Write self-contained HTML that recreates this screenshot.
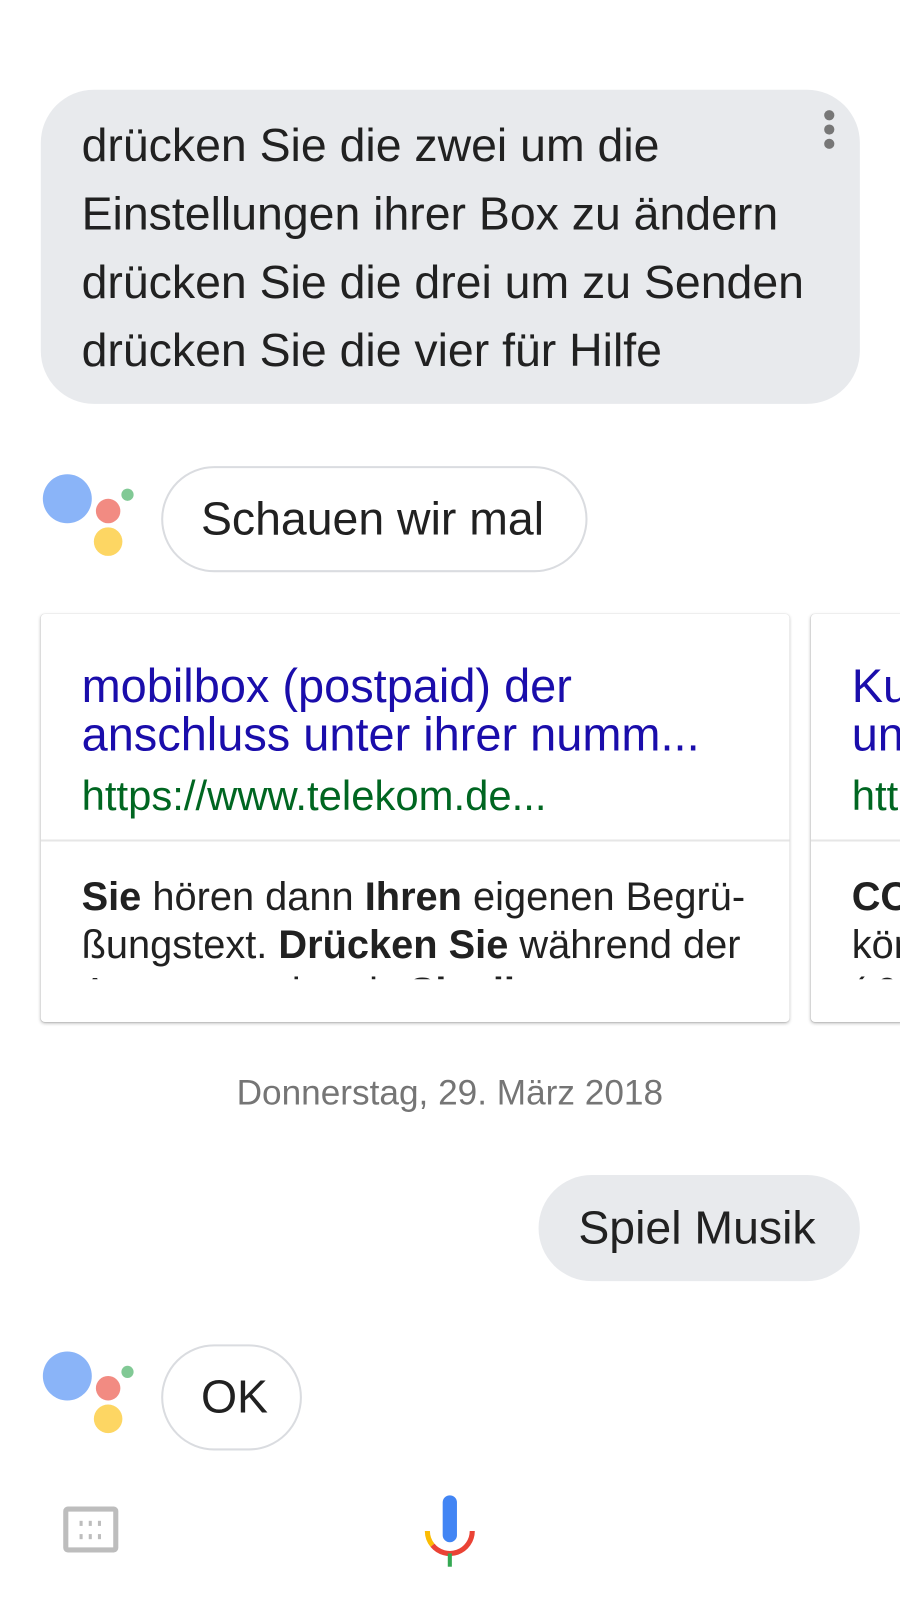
<!DOCTYPE html>
<html><head><meta charset="utf-8"><style>
*{margin:0;padding:0;box-sizing:border-box}
html,body{width:900px;height:1600px;overflow:hidden}
body{background:#fff;position:relative;font-family:"Liberation Sans",sans-serif;color:#212121}
#c{position:absolute;left:0;top:0;width:900px;height:1600px;overflow:hidden}
#w{position:absolute;left:0;top:0;width:882px;height:1569px;transform:scale(1.02);transform-origin:0 0}
.a{position:absolute;white-space:nowrap}
.bub{position:absolute;background:#e8eaed;border-radius:52px}
.pill{position:absolute;border:2px solid #dadce0;border-radius:54px;background:#fff}
.t{font-size:45.5px;line-height:67px}
.dot{position:absolute;border-radius:50%}
.card{position:absolute;background:#fff;border-radius:4px;box-shadow:0 1px 3px rgba(0,0,0,.25),0 0 1px rgba(0,0,0,.15);overflow:hidden}
</style></head><body><div id="c"><div id="w">
<div class="bub" style="left:40px;top:88px;width:803px;height:308px"></div>
<div class="dot" style="left:808px;top:108px;width:10px;height:10px;background:#777"></div>
<div class="dot" style="left:808px;top:122px;width:10px;height:10px;background:#777"></div>
<div class="dot" style="left:808px;top:136px;width:10px;height:10px;background:#777"></div>
<div class="a t" style="left:80px;top:109px">drücken Sie die zwei um die</div>
<div class="a t" style="left:80px;top:176px">Einstellungen ihrer Box zu ändern</div>
<div class="a t" style="left:80px;top:243px">drücken Sie die drei um zu Senden</div>
<div class="a t" style="left:80px;top:310px">drücken Sie die vier für Hilfe</div>

<div class="dot" style="left:42px;top:465px;width:48px;height:48px;background:#8ab4f8"></div>
<div class="dot" style="left:94px;top:489px;width:24px;height:24px;background:#f28b82"></div>
<div class="dot" style="left:119px;top:479px;width:12px;height:12px;background:#81c995"></div>
<div class="dot" style="left:92px;top:517px;width:28px;height:28px;background:#fdd663"></div>
<div class="pill" style="left:158px;top:457px;width:418px;height:104px"></div>
<div class="a t" style="left:197px;top:475px">Schauen wir mal</div>

<div class="card" style="left:40px;top:602px;width:734px;height:400px">
 <div class="a" style="left:40px;top:46px;font-size:46px;line-height:48px;color:#1a0dab">mobilbox (postpaid) der<br>anschluss unter ihrer numm...</div>
 <div class="a" style="left:40px;top:156px;font-size:41px;line-height:44px;color:#006621">https://www.telekom.de...</div>
 <div class="a" style="left:0;top:221px;width:734px;height:2px;background:#e6e6e6"></div>
 <div class="a" style="left:40px;top:254px;font-size:39px;line-height:47px;height:104px;overflow:hidden"><b>Sie</b> hören dann <b>Ihren</b> eigenen Begrü-<br>ßungstext. <b>Drücken Sie</b> während der<br>Ansage nochmals <b>Sie die</b> ...</div>
</div>
<div class="card" style="left:795px;top:602px;width:90px;height:400px;border-radius:4px 0 0 4px">
 <div class="a" style="left:40px;top:46px;font-size:46px;line-height:48px;color:#1a0dab">Kunden<br>unter</div>
 <div class="a" style="left:40px;top:156px;font-size:41px;line-height:44px;color:#006621">https</div>
 <div class="a" style="left:0;top:221px;width:300px;height:2px;background:#e6e6e6"></div>
 <div class="a" style="left:40px;top:254px;font-size:39px;line-height:47px;height:104px;overflow:hidden"><b>CO</b><br>können<br>( 0</div>
</div>

<div class="a" style="left:0;width:882px;text-align:center;top:1053px;font-size:34.5px;color:#757575">Donnerstag, 29. März 2018</div>

<div class="bub" style="left:528px;top:1152px;width:315px;height:104px"></div>
<div class="a t" style="left:567px;top:1170px">Spiel Musik</div>

<div class="dot" style="left:42px;top:1325px;width:48px;height:48px;background:#8ab4f8"></div>
<div class="dot" style="left:94px;top:1349px;width:24px;height:24px;background:#f28b82"></div>
<div class="dot" style="left:119px;top:1339px;width:12px;height:12px;background:#81c995"></div>
<div class="dot" style="left:92px;top:1377px;width:28px;height:28px;background:#fdd663"></div>
<div class="pill" style="left:158px;top:1318px;width:138px;height:104px"></div>
<div class="a t" style="left:197px;top:1336px">OK</div>

<svg class="a" style="left:60px;top:1476px" width="60" height="50" viewBox="0 0 60 50">
<rect x="4.5" y="3.5" width="49" height="40" rx="2" fill="none" stroke="#bdbdbd" stroke-width="5"/>
<g fill="#bdbdbd"><rect x="18" y="15" width="3" height="5"/><rect x="27" y="15" width="3" height="5"/><rect x="36" y="15" width="3" height="5"/><rect x="18" y="28" width="3" height="5"/><rect x="27" y="28" width="3" height="5"/><rect x="36" y="28" width="3" height="5"/></g>
</svg>
<svg class="a" style="left:411px;top:1461px" width="60" height="80" viewBox="0 0 60 80">
<rect x="23" y="5" width="14" height="46" rx="7" fill="#4285f4"/>
<path d="M8 40 A22 22 0 0 0 13 54" fill="none" stroke="#fbbc04" stroke-width="5"/>
<path d="M13 54 A22 22 0 0 0 52 40" fill="none" stroke="#ea4335" stroke-width="5"/>
<rect x="28" y="62" width="4" height="13" fill="#34a853"/>
</svg>
</div></div></body></html>
